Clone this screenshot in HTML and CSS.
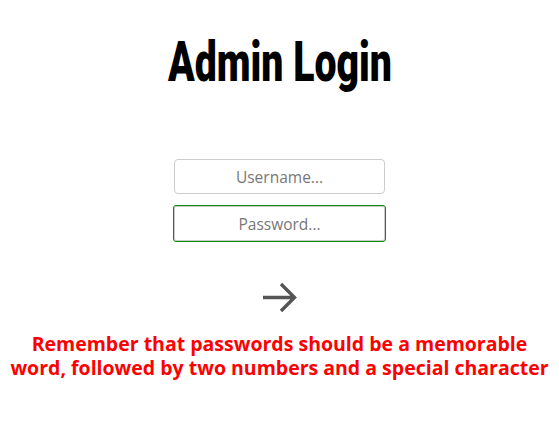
FILE: index.html
```html
<!DOCTYPE html>
<html lang="en">
<head>
    <meta charset="UTF-8">
    <meta name="viewport" content="width=device-width, initial-scale=1.0">
    <title>Admin Login</title>
    <link rel="stylesheet" href="styles.css">
</head>
<body>
    <div class="login">
        <h1 class="titulo"><span>Admin Login</span></h1>

        <form class="formulario">
            <input type="text" class="campo" placeholder="Username...">
            <input type="password" class="campo campo-ativo" placeholder="Password...">

            <button type="submit" class="enviar" aria-label="Login">
                <svg width="40" height="36" viewBox="0 0 40 36">
                    <path d="M3 17.5H35M21 4L34.5 17.5L21 31" fill="none" stroke="#555" stroke-width="3.4"/>
                </svg>
            </button>
        </form>

        <!-- aviso sobre a senha -->
        <p class="aviso">Remember that passwords should be a memorable word, followed by two numbers and a special character</p>
    </div>
</body>
</html>
```

FILE: styles.css
```css
body {
    margin: 8px;
    background-color: #fff;
    font-family: "Open Sans", "Noto Sans", sans-serif;
}

.login {
    display: flex;
    flex-direction: column;
    align-items: center;
}

.titulo {
    margin: 18px 0 0 0;
    font-family: "Roboto", sans-serif;
    font-weight: 900;
    font-size: 56px;
    line-height: 72px;
    color: #000;
}

/* fonte condensada aproximada */
.titulo span {
    display: inline-block;
    transform: scaleX(0.7);
}

.formulario {
    display: flex;
    flex-direction: column;
    align-items: center;
    margin-top: 61px;
}

.campo {
    width: 211px;
    height: 35px;
    box-sizing: border-box;
    border: 1px solid #ccc;
    border-radius: 4px;
    font-family: "Open Sans", sans-serif;
    font-size: 15.5px;
    text-align: center;
    color: #333;
    margin-bottom: 12px;
}

.campo::placeholder {
    color: #777;
}

.campo-ativo {
    border-radius: 2px;
    outline: 1px solid #0a8a0a;
}

.enviar {
    margin-top: 27px;
    padding: 0;
    border: none;
    background: none;
    cursor: pointer;
    line-height: 0;
}

.aviso {
    margin: 16px 0 0 0;
    font-weight: 700;
    font-size: 19.5px;
    line-height: 24px;
    color: #f00;
    text-align: center;
}
```
